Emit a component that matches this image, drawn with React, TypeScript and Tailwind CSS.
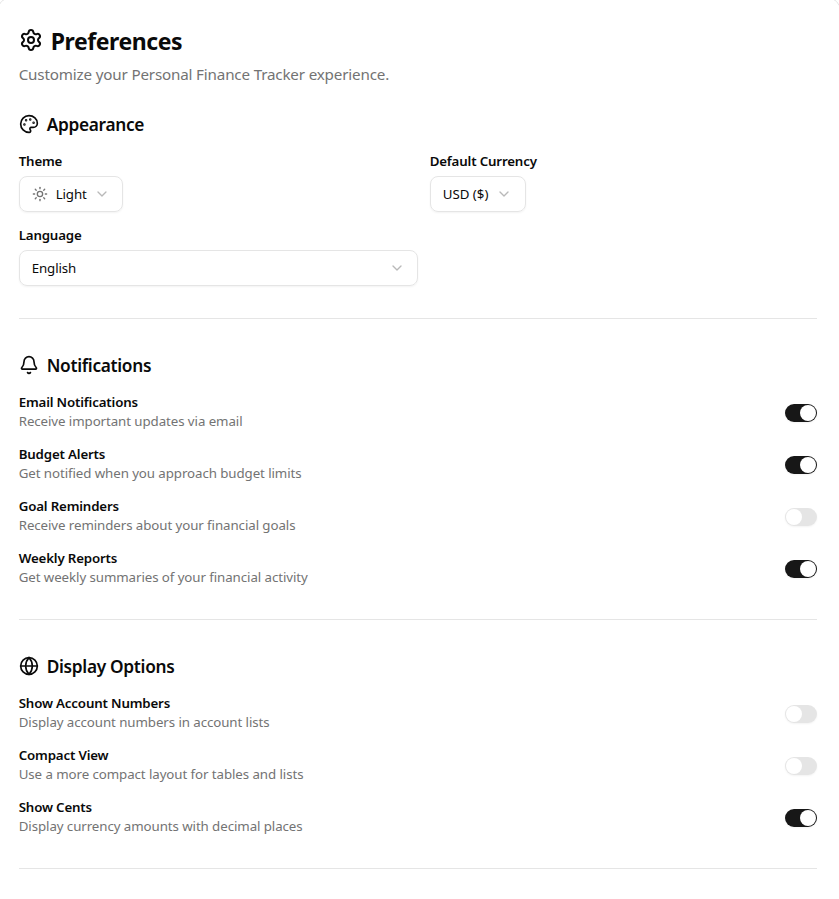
import React from "react";
import { Settings, Palette, Bell, Globe, Sun, ChevronDown } from "lucide-react";

type Item = { title: string; text: string; on: boolean };

const notifications: Item[] = [
  { title: "Email Notifications", text: "Receive important updates via email", on: true },
  { title: "Budget Alerts", text: "Get notified when you approach budget limits", on: true },
  { title: "Goal Reminders", text: "Receive reminders about your financial goals", on: false },
  { title: "Weekly Reports", text: "Get weekly summaries of your financial activity", on: true },
];

const display: Item[] = [
  { title: "Show Account Numbers", text: "Display account numbers in account lists", on: false },
  { title: "Compact View", text: "Use a more compact layout for tables and lists", on: false },
  { title: "Show Cents", text: "Display currency amounts with decimal places", on: true },
];

function Toggle({ on }: { on: boolean }) {
  return (
    <button
      role="switch"
      aria-checked={on}
      className={`flex h-[18.4px] w-8 items-center rounded-full border border-transparent shadow-xs ${on ? "justify-end bg-[#171717]" : "bg-[#e5e5e5]"}`}
    >
      <span className="size-4 rounded-full bg-white" />
    </button>
  );
}

function Label({ children }: { children: React.ReactNode }) {
  return <div className="text-[13.3px] leading-[14px] font-semibold tracking-[-0.17px] whitespace-nowrap">{children}</div>;
}

function Row({ item }: { item: Item }) {
  return (
    <div className="flex h-9 items-center justify-between">
      <div>
        <Label>{item.title}</Label>
        <p className="mt-0.5 text-[13.3px] leading-5 tracking-[-0.08px] text-[#737373]">{item.text}</p>
      </div>
      <Toggle on={item.on} />
    </div>
  );
}

function Heading({ icon, children }: { icon: React.ReactNode; children: React.ReactNode }) {
  return (
    <h2 className="flex h-7 items-center gap-2 text-[17.3px] font-semibold tracking-[-0.31px]">
      {icon}
      <span className="pt-0.5">{children}</span>
    </h2>
  );
}

export default function App() {
  return (
    <div className="h-[899px] overflow-hidden bg-white font-['Noto_Sans',sans-serif] text-[#0a0a0a]">
      <div className="-mt-[3px] -mr-0.5 -ml-[3px] h-[920px] rounded-[14px] border border-[#e5e5e5] bg-white pt-[27px] pr-[23px] pl-[20.7px]">
        <h1 className="flex h-8 items-center gap-2 text-[23px] font-bold tracking-[-0.43px]">
          <Settings className="mb-0.5 size-6" />
          Preferences
        </h1>
        <p className="mt-[5px] text-[15.2px] leading-6 tracking-[-0.17px] text-[#737373]">Customize your Personal Finance Tracker experience.</p>

        <section className="mt-6 space-y-4">
          <Heading icon={<Palette className="size-5" />}>Appearance</Heading>
          <div className="grid grid-cols-[399px_1fr] gap-x-3 gap-y-4">
            <div className="space-y-2">
              <Label>Theme</Label>
              <button className="flex h-9 w-[104px] items-center gap-2 rounded-lg border border-[#e5e5e5] px-3 text-[13.3px] tracking-[-0.1px] shadow-xs">
                <Sun className="size-4 text-[#737373]" />
                <span className="pt-0.5">Light</span>
                <ChevronDown className="-ml-px size-4 text-[#b9b9b9]" />
              </button>
            </div>
            <div className="space-y-2">
              <Label>Default Currency</Label>
              <button className="flex h-9 w-24 items-center gap-2 rounded-lg border border-[#e5e5e5] px-3 text-[13.3px] shadow-xs">
                <span className="pt-0.5">USD ($)</span>
                <ChevronDown className="size-4 text-[#b9b9b9]" />
              </button>
            </div>
            <div className="space-y-2">
              <Label>Language</Label>
              <button className="flex h-9 w-full items-center justify-between rounded-lg border border-[#e5e5e5] px-3 text-[13.3px] tracking-[-0.1px] shadow-xs">
                <span className="pt-0.5">English</span>
                <ChevronDown className="size-4 text-[#b9b9b9]" />
              </button>
            </div>
          </div>
        </section>

        <hr className="my-8 border-[#e5e5e5]" />

        <section className="space-y-4">
          <Heading icon={<Bell className="size-5" />}>Notifications</Heading>
          {notifications.map((i) => <Row key={i.title} item={i} />)}
        </section>

        <hr className="my-8 border-[#e5e5e5]" />

        <section className="space-y-4">
          <Heading icon={<Globe className="size-5" />}>Display Options</Heading>
          {display.map((i) => <Row key={i.title} item={i} />)}
        </section>

        <hr className="mt-8 border-[#e5e5e5]" />
      </div>
    </div>
  );
}
